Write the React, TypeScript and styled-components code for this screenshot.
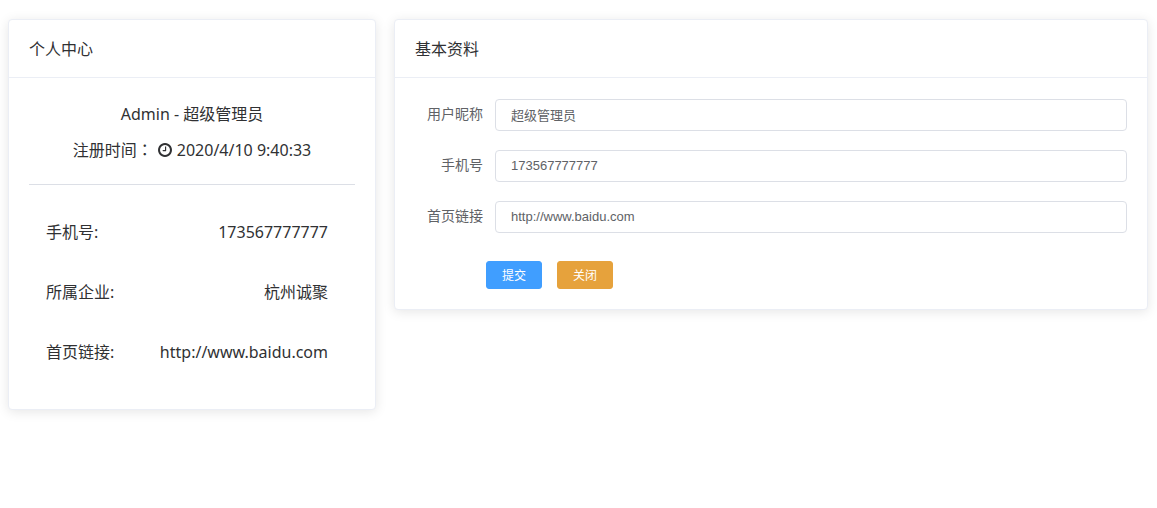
import React from "react";
import styled, { createGlobalStyle } from "styled-components";

const GlobalStyle = createGlobalStyle`
  * {
    box-sizing: border-box;
  }
  body {
    margin: 0;
    background: #fff;
    color: #303133;
    font: 16px/24px "Noto Sans", "Noto Sans CJK SC", sans-serif;
  }
`;

const Page = styled.main`
  display: grid;
  grid-template-columns: minmax(0, 368fr) minmax(0, 754fr);
  align-items: start;
  gap: 18px;
  padding: 19px 9px 19px 8px;
`;

const Card = styled.section`
  border: 1px solid #ebeef5;
  border-radius: 4px;
  background: #fff;
  box-shadow: 0 2px 12px 0 rgba(0, 0, 0, 0.1);
`;

const CardHeader = styled.h2`
  margin: 0;
  padding: 17px 20px 16px;
  border-bottom: 1px solid #ebeef5;
  font-size: 16px;
  font-weight: 400;
`;

const ProfileBody = styled.div`
  padding: 18px 20px 27px;
`;

const Summary = styled.div`
  padding-bottom: 16px;
  border-bottom: 1px solid #dcdfe6;
  text-align: center;
`;

const SummaryLine = styled.p`
  display: flex;
  align-items: center;
  justify-content: center;
  gap: 5px;
  margin: 0;
  line-height: 36px;
`;

const CenteredColon = styled.span`
  font-family: "Noto Sans CJK TC", sans-serif;
  line-height: 16px;
`;

const ClockIcon = styled.svg`
  width: 14px;
  height: 14px;
  fill: currentColor;
`;

const Details = styled.dl`
  margin: 17px 0 0;
  padding: 0 27px 0 17px;
`;

const DetailRow = styled.div`
  display: flex;
  justify-content: space-between;
  line-height: 60px;
`;

const DetailLabel = styled.dt`
  white-space: nowrap;
`;

const DetailValue = styled.dd`
  margin: 0;
`;

const Form = styled.form`
  padding: 21px 20px 20px;
`;

const Fields = styled.div`
  display: grid;
  gap: 19px;
`;

const Field = styled.div`
  display: flex;
`;

const FieldLabel = styled.label`
  flex: 0 0 80px;
  padding-right: 12px;
  color: #606266;
  font-size: 14px;
  line-height: 30px;
  text-align: right;
`;

const TextInput = styled.input`
  flex: 1;
  min-width: 0;
  height: 32px;
  padding: 0 15px 2px;
  border: 1px solid #dcdfe6;
  border-radius: 4px;
  background: #fff;
  color: #606266;
  font: 13px "Liberation Sans", "Noto Sans CJK SC", sans-serif;
  outline: none;

  &:focus {
    border-color: #409eff;
  }
`;

const Actions = styled.div`
  display: flex;
  gap: 15px;
  margin-top: 28px;
  padding-left: 71px;
`;

const Button = styled.button<{ $tone: string }>`
  width: 56px;
  height: 28px;
  padding: 0 0 2px;
  border: 1px solid ${({ $tone }) => $tone};
  border-radius: 3px;
  background: ${({ $tone }) => $tone};
  color: #fff;
  font: 12px "Liberation Sans", "Noto Sans CJK SC", sans-serif;
  cursor: pointer;
`;

const details = [
  { label: "手机号:", value: "173567777777" },
  { label: "所属企业:", value: "杭州诚聚" },
  { label: "首页链接:", value: "http://www.baidu.com" },
];

const fields = [
  { id: "nickname", label: "用户昵称", value: "超级管理员" },
  { id: "phone", label: "手机号", value: "173567777777" },
  { id: "homepage", label: "首页链接", value: "http://www.baidu.com" },
];

export default function App() {
  return (
    <>
      <GlobalStyle />
      <Page>
        <Card>
          <CardHeader>个人中心</CardHeader>
          <ProfileBody>
            <Summary>
              <SummaryLine>Admin - 超级管理员</SummaryLine>
              <SummaryLine>
                <span>
                  注册时间<CenteredColon lang="zh-Hant">：</CenteredColon>
                </span>
                <ClockIcon viewBox="0 128 1536 1536" aria-hidden="true">
                  <path d="M896 544v448q0 14-9 23t-23 9h-320q-14 0-23-9t-9-23v-64q0-14 9-23t23-9h224v-352q0-14 9-23t23-9h64q14 0 23 9t9 23zm416 352q0-148-73-273t-198-198-273-73-273 73-198 198-73 273 73 273 198 198 273 73 273-73 198-198 73-273zm224 0q0 209-103 385.5t-279.5 279.5-385.5 103-385.5-103-279.5-279.5-103-385.5 103-385.5 279.5-279.5 385.5-103 385.5 103 279.5 279.5 103 385.5z" />
                </ClockIcon>
                <time dateTime="2020-04-10T09:40:33">2020/4/10 9:40:33</time>
              </SummaryLine>
            </Summary>
            <Details>
              {details.map((item) => (
                <DetailRow key={item.label}>
                  <DetailLabel>{item.label}</DetailLabel>
                  <DetailValue>{item.value}</DetailValue>
                </DetailRow>
              ))}
            </Details>
          </ProfileBody>
        </Card>
        <Card>
          <CardHeader>基本资料</CardHeader>
          <Form onSubmit={(event) => event.preventDefault()}>
            <Fields>
              {fields.map((field) => (
                <Field key={field.id}>
                  <FieldLabel htmlFor={field.id}>{field.label}</FieldLabel>
                  <TextInput id={field.id} type="text" defaultValue={field.value} />
                </Field>
              ))}
            </Fields>
            <Actions>
              <Button type="submit" $tone="#409eff">提交</Button>
              <Button type="button" $tone="#e6a23c">关闭</Button>
            </Actions>
          </Form>
        </Card>
      </Page>
    </>
  );
}
